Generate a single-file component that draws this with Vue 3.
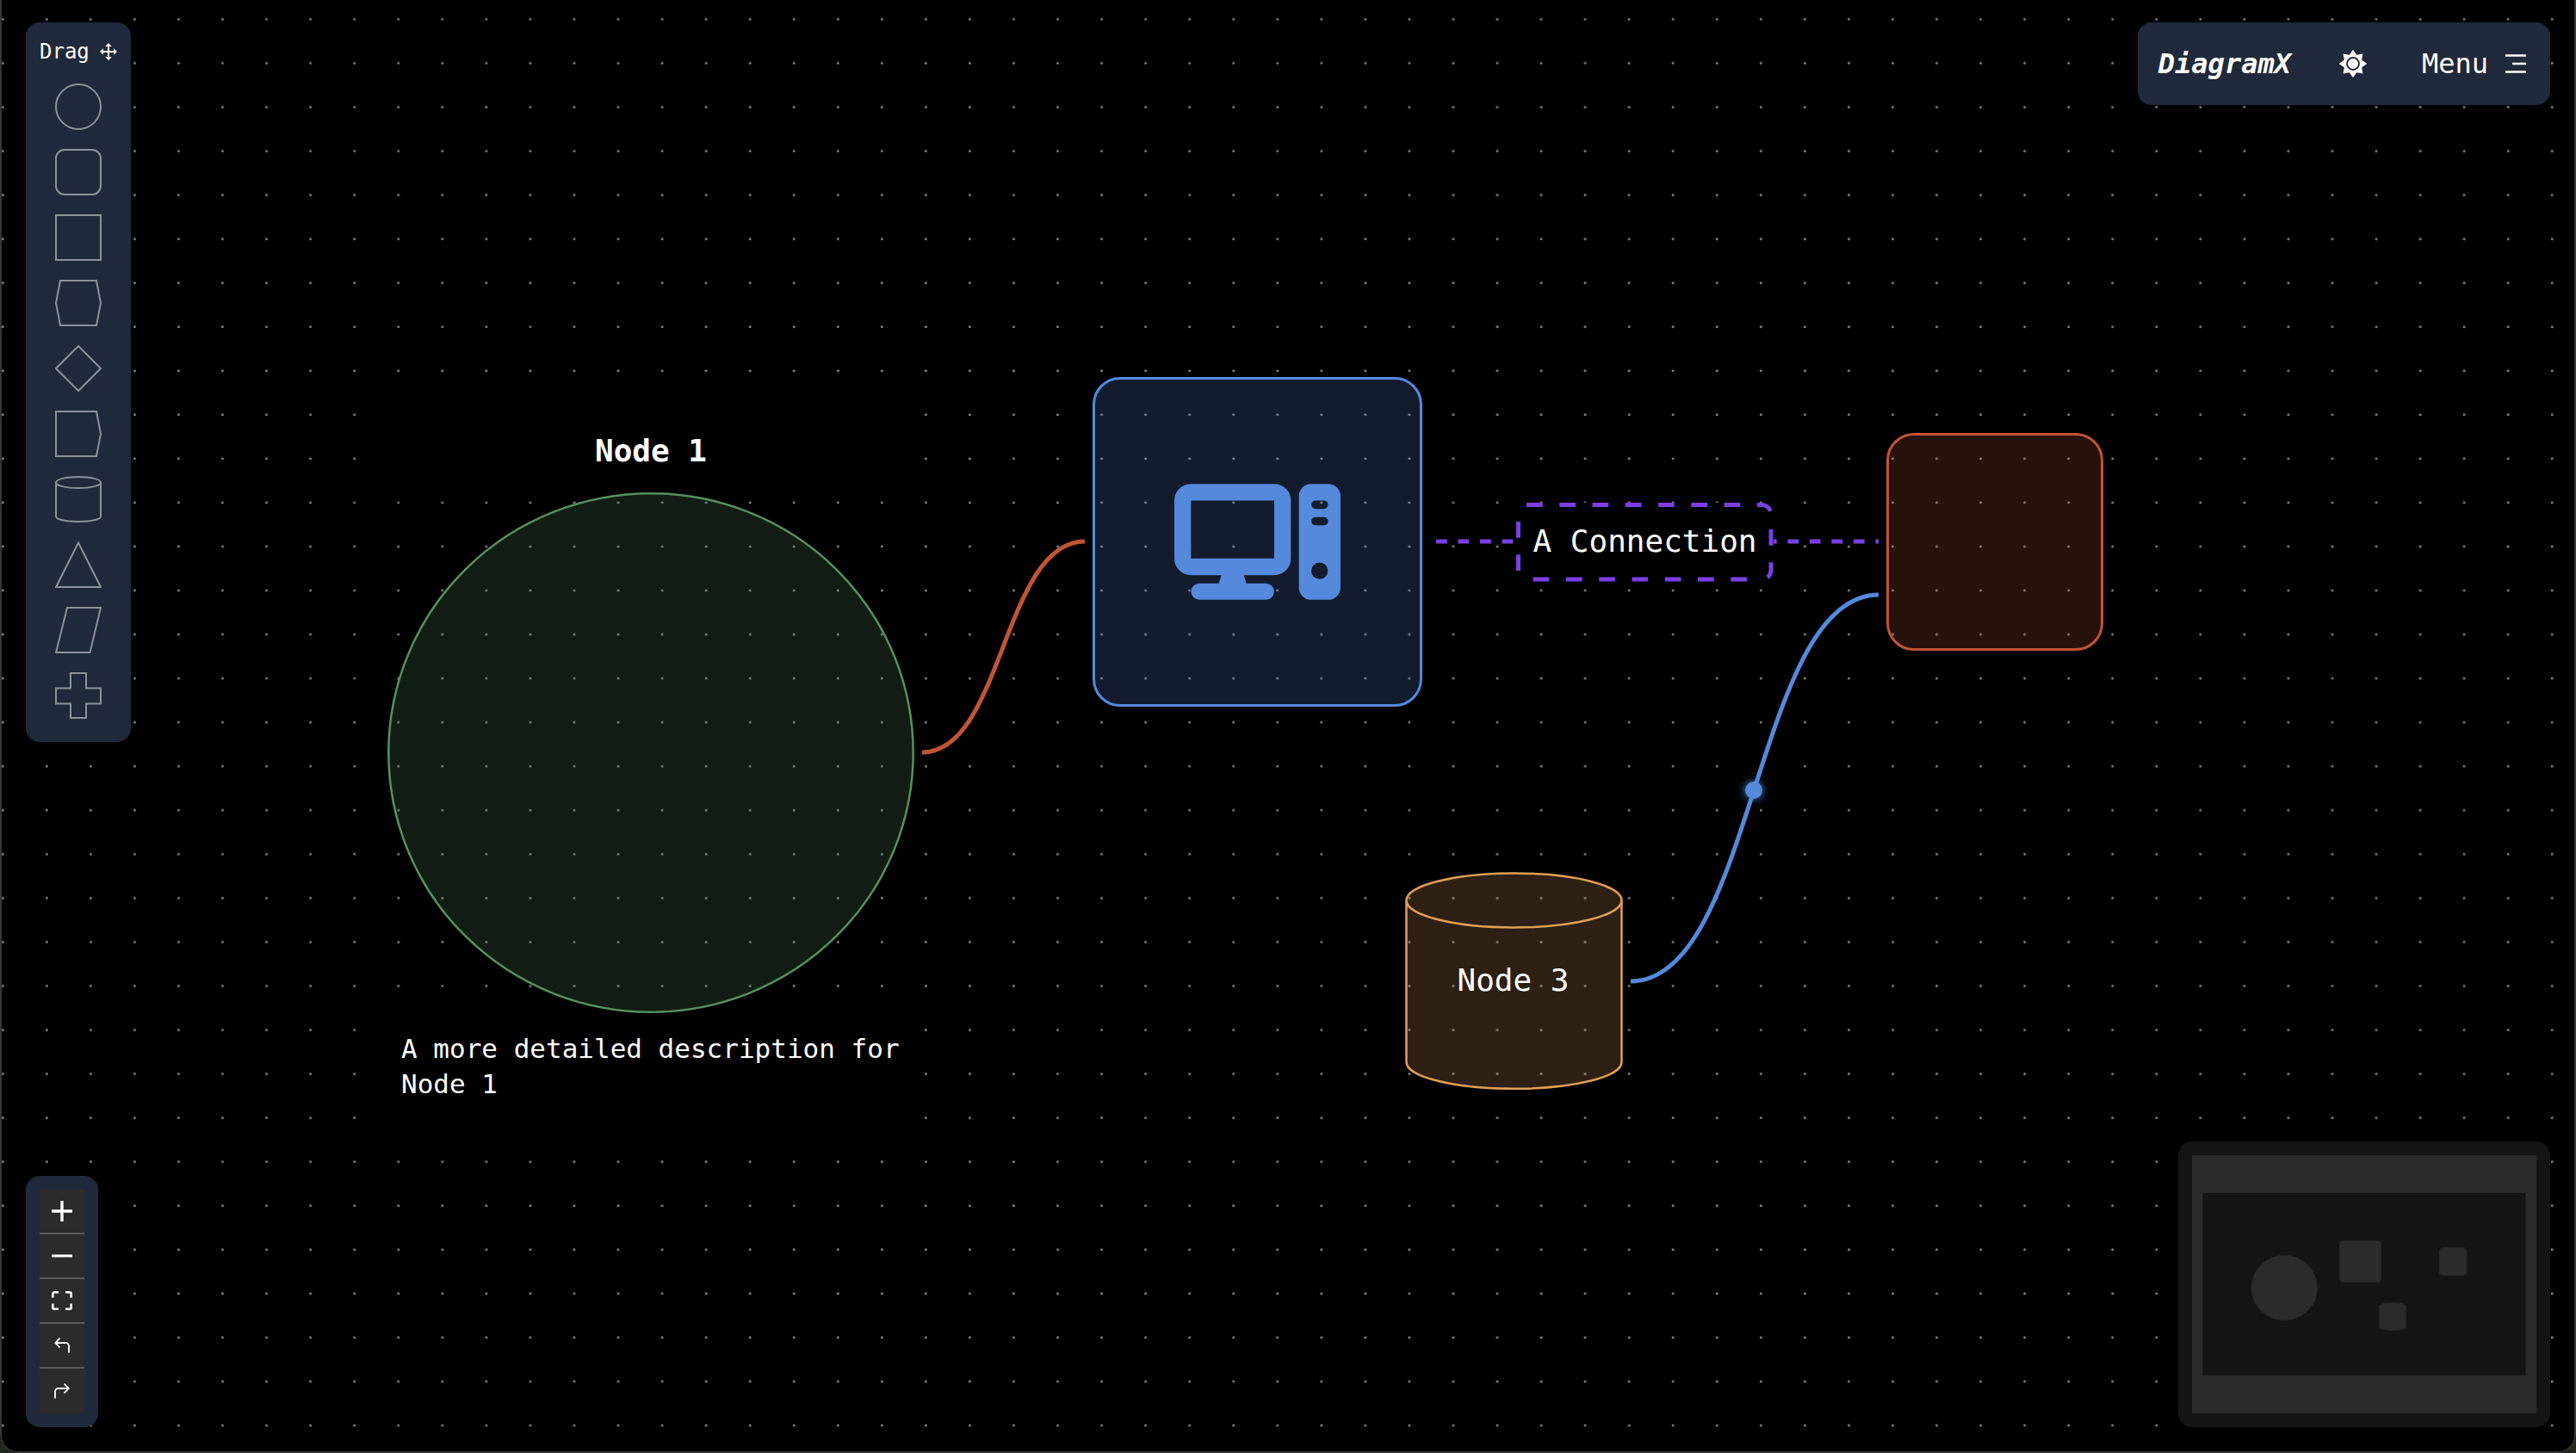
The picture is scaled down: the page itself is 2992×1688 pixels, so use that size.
<script setup>
import { ref } from 'vue'

const shapes = [
  { name: 'Circle', d: 'M27 1a26 26 0 1 0 0 52a26 26 0 1 0 0-52z' },
  { name: 'Rounded rectangle', d: 'M11 1H43a10 10 0 0 1 10 10V43a10 10 0 0 1-10 10H11A10 10 0 0 1 1 43V11A10 10 0 0 1 11 1z' },
  { name: 'Rectangle', d: 'M1 1H53V53H1z' },
  { name: 'Hexagon', d: 'M6 1H48L53 27L48 53H6L1 27z' },
  { name: 'Diamond', d: 'M27 1L53 27L27 53L1 27z' },
  { name: 'Arrow rectangle', d: 'M1 1H48L53 27L48 53H1z' },
  { name: 'Cylinder', d: 'M1 7.500V47C1 50.500 12.500 53 27 53S53 50.500 53 47V7.500M1 7.500a26 6.500 0 1 0 52 0a26 6.500 0 1 0-52 0z' },
  { name: 'Triangle', d: 'M27 1.500L53 53H1z' },
  { name: 'Parallelogram', d: 'M14 1H53L40.500 53H1z' },
  { name: 'Plus', d: 'M18 1H36V18.500H53V36.500H36V53H18V36.500H1V18.500H18z' }
]

const controls = [
  { name: 'Zoom in', w: 24, h: 24, box: '0 0 24 24', d: 'M12 0V24M0 12H24', stroke: 3.4 },
  { name: 'Zoom out', w: 24, h: 4, box: '0 0 24 4', d: 'M0 2H24', stroke: 3 },
  { name: 'Fit view', w: 24, h: 22, box: '0 0 24 22', d: 'M1.300 7.500V3.300a2 2 0 0 1 2-2H8M16 1.300h4.700a2 2 0 0 1 2 2V7.500M22.700 14.500v4.200a2 2 0 0 1-2 2H16M8 20.700H3.300a2 2 0 0 1-2-2V14.500', stroke: 2.6 },
  { name: 'Undo', w: 18, h: 18, box: '0 0 18 18', d: 'M17 17.500V9.500a3.500 3.500 0 0 0-3.500-3.500H1.200M6.500 0.700L1.200 6L6.500 11.300', stroke: 1.8 },
  { name: 'Redo', w: 18, h: 18, box: '0 0 18 18', d: 'M1 17.500V9.500a3.500 3.500 0 0 1 3.500-3.500H16.800M11.500 0.700L16.800 6L11.500 11.300', stroke: 1.8 }
]

const sun = Array.from({ length: 16 }, (_, i) => {
  const r = i % 2 ? 11 : 16.2
  const a = (i * Math.PI) / 8
  return `${(16 + r * Math.sin(a)).toFixed(2)},${(16 - r * Math.cos(a)).toFixed(2)}`
}).join(' ')

const menuOpen = ref(false)
</script>

<template>
  <main class="app">
    <svg class="grid" aria-hidden="true">
      <defs>
        <pattern id="dots" width="51.05" height="51.05" patternUnits="userSpaceOnUse">
          <circle cx="3.3" cy="22.4" r="1.5" />
        </pattern>
      </defs>
      <rect width="100%" height="100%" fill="url(#dots)" />
    </svg>

    <section class="flow" aria-label="Diagram">
      <svg class="edges" aria-hidden="true">
        <path class="edge red" d="M1071 874C1165 874 1165 629 1260 629" />
        <path class="edge purple" d="M1668 629H2182" />
        <path class="edge blue" d="M1894 1140C2038 1140 2038 691 2182 691" />
        <circle class="pulse" cx="2037" cy="918" r="10" />
      </svg>

      <article class="node node-circle">
        <h2 class="title">Node 1</h2>
        <svg class="ellipse" width="612" height="605" aria-hidden="true">
          <ellipse cx="306" cy="302.5" rx="304.700" ry="301.200" />
        </svg>
        <p class="description">A more detailed description for Node 1</p>
      </article>

      <article class="node box box-blue">
        <svg width="193" height="135" viewBox="371 426 579 404" role="img" aria-label="Computer">
          <path
            fill-rule="evenodd"
            d="M429 426H719a58 58 0 0 1 58 58V686a58 58 0 0 1-58 58H613L622 773H690a28.500 28.500 0 0 1 0 57H458a28.500 28.500 0 0 1 0-57H526L535 744H429a58 58 0 0 1-58-58V484a58 58 0 0 1 58-58zM429 484V686H719V484zM848 426H907a43 43 0 0 1 43 43V787a43 43 0 0 1-43 43H848a43 43 0 0 1-43-43V469a43 43 0 0 1 43-43zM863 484a14.500 14.500 0 0 0 0 29H892a14.500 14.500 0 0 0 0-29zM863 541.500a14.500 14.500 0 0 0 0 29H892a14.500 14.500 0 0 0 0-29zM877 700a29 29 0 1 0 0 58a29 29 0 1 0 0-58z"
          />
        </svg>
      </article>

      <article class="node box box-red"></article>

      <article class="node cylinder">
        <svg width="253" height="253" aria-hidden="true">
          <path class="fill" d="M1.500 33C1.500 15.600 57.500 1.500 126.500 1.500S251.500 15.600 251.500 33V221C251.500 238 195.500 251.800 126.500 251.800S1.500 238 1.500 221z" />
          <path class="line" d="M1.500 33C1.500 50.400 57.500 64.500 126.500 64.500S251.500 50.400 251.500 33" />
        </svg>
        <span class="caption">Node 3</span>
      </article>

      <div class="node edge-label">
        <svg class="outline" aria-hidden="true">
          <path d="M12 2.500H285a11 11 0 0 1 11 9.500" />
          <path d="M296 31V78a11 11 0 0 1-9 11" />
          <path d="M268 89H19" />
          <path d="M2.500 79V20" />
        </svg>
        <span>A Connection</span>
      </div>
    </section>

    <div class="panels">
      <div class="side">
        <aside class="toolbar">
          <h1 class="drag">
            Drag
            <svg width="20" height="20" viewBox="0 0 20 20" aria-hidden="true">
              <path d="M10 2V18M2 10H18" stroke="#fff" stroke-width="2" />
              <path d="M10 0L13.800 4H6.200zM10 20L13.800 16H6.200zM0 10L4 6.200V13.800zM20 10L16 6.200V13.800z" fill="#fff" />
            </svg>
          </h1>
          <button v-for="s in shapes" :key="s.name" type="button" class="shape" :aria-label="s.name" draggable="true">
            <svg width="54" height="54" viewBox="0 0 54 54" aria-hidden="true"><path :d="s.d" /></svg>
          </button>
        </aside>

        <nav class="controls" aria-label="Canvas controls">
          <button v-for="c in controls" :key="c.name" type="button" class="control" :aria-label="c.name">
            <svg :width="c.w" :height="c.h" :viewBox="c.box" aria-hidden="true">
              <path :d="c.d" :stroke-width="c.stroke" />
            </svg>
          </button>
        </nav>
      </div>

      <div class="side side-right">
        <header class="topbar">
          <span class="brand">DiagramX</span>
          <button type="button" class="theme" aria-label="Toggle theme">
            <svg width="32" height="32" viewBox="0 0 32 32" aria-hidden="true">
              <polygon :points="sun" fill="#fff" />
              <circle cx="16" cy="16" r="7" fill="#fff" stroke="#202939" stroke-width="1.900" />
            </svg>
          </button>
          <button type="button" class="menu" :aria-expanded="menuOpen" @click="menuOpen = !menuOpen">
            Menu
            <svg width="24" height="22" viewBox="0 0 24 22" aria-hidden="true">
              <path d="M0 1.500H24M8 11H24M0 20.500H24" stroke="#fff" stroke-width="2.700" />
            </svg>
          </button>
        </header>

        <aside class="minimap">
          <svg width="400" height="300" viewBox="0 0 400 300" role="img" aria-label="Mini map">
            <rect width="400" height="300" fill="#2a2a2a" />
            <rect x="12.500" y="44" width="375" height="212" fill="#141414" />
            <g fill="#2b2b2b" stroke="#242424" stroke-width="1">
              <ellipse cx="107.300" cy="154" rx="38.300" ry="37.700" />
              <rect x="171.500" y="99.500" width="48" height="48" rx="3.500" />
              <rect x="287.500" y="107.500" width="31.500" height="32" rx="3.500" />
              <path d="M217.500 175.500c0-2.500 7-4 15.500-4s15.500 1.500 15.500 4v24c0 2.500-7 4-15.500 4s-15.500-1.500-15.500-4z" />
            </g>
          </svg>
        </aside>
      </div>
    </div>
  </main>
</template>

<style>
html,
body {
  margin: 0;
  background: #23281c;
}
</style>

<style scoped>
* {
  box-sizing: border-box;
}

.app {
  position: relative;
  display: flex;
  min-height: 100vh;
  overflow: hidden;
  border-radius: 0 0 20px 20px;
  background: #000;
  color: #fff;
  font-family: 'DejaVu Sans Mono', 'Liberation Mono', monospace;
}

.app::after {
  content: '';
  position: absolute;
  inset: 0;
  border: 2px solid #363636;
  border-top: 0;
  border-radius: 0 0 20px 20px;
  pointer-events: none;
}

svg {
  display: block;
  flex: none;
}

button {
  display: flex;
  align-items: center;
  justify-content: center;
  padding: 0;
  border: 0;
  background: none;
  color: inherit;
  font: inherit;
  cursor: pointer;
}

.grid {
  position: absolute;
  inset: 0;
  width: 100%;
  height: 100%;
}

.grid circle {
  fill: #818181;
}

.flow,
.edges {
  position: absolute;
  inset: 0;
  width: 100%;
  height: 100%;
}

.edge {
  fill: none;
  stroke-width: 5;
}

.red {
  stroke: #c15436;
}

.purple {
  stroke: #7b3fe4;
  stroke-dasharray: 12.76;
}

.blue {
  stroke: #5489dc;
}

.pulse {
  fill: #5489dc;
  filter: drop-shadow(0 0 5px #5489dc);
}

.node {
  position: absolute;
  display: flex;
}

.node-circle {
  left: 450px;
  top: 474px;
  width: 612px;
  flex-direction: column;
}

.title {
  margin: 0;
  padding: 26px 0 24px;
  background: #000;
  font-size: 36px;
  line-height: 48px;
  text-align: center;
}

.ellipse {
  fill: rgba(86, 144, 96, 0.2);
  stroke: #569060;
  stroke-width: 2.5;
}

.description {
  margin: 0;
  padding: 21px 16px;
  background: #000;
  font-size: 31px;
  line-height: 41px;
}

.box {
  align-items: center;
  justify-content: center;
  border: 3px solid;
  border-radius: 32px;
}

.box-blue {
  left: 1269px;
  top: 438px;
  width: 383px;
  height: 383px;
  border-color: #5489dc;
  background: rgba(84, 137, 220, 0.2);
  fill: #5489dc;
}

.box-red {
  left: 2191px;
  top: 503px;
  width: 252px;
  height: 253px;
  border-color: #c15436;
  background: rgba(193, 84, 54, 0.2);
}

.cylinder {
  left: 1632px;
  top: 1013px;
  width: 253px;
  height: 253px;
  align-items: center;
  justify-content: center;
}

.cylinder svg {
  position: absolute;
  inset: 0;
  fill: none;
  stroke: #e09f54;
  stroke-width: 2.5;
}

.cylinder .fill {
  fill: rgba(225, 158, 88, 0.2);
}

.caption {
  position: relative;
  padding: 0 2px 2px 0;
  font-size: 36px;
  line-height: 48px;
}

.edge-label {
  left: 1761px;
  top: 584px;
  width: 299px;
  height: 92px;
  align-items: center;
  justify-content: center;
  padding-bottom: 2px;
  border-radius: 12px;
  background: #000;
  font-size: 36px;
  line-height: 48px;
  white-space: nowrap;
}

.outline {
  position: absolute;
  inset: 0;
  width: 100%;
  height: 100%;
  fill: none;
  stroke: #7b3fe4;
  stroke-width: 5;
  stroke-dasharray: 18.7 19.57;
}

.panels {
  position: relative;
  display: flex;
  flex: 1;
  justify-content: space-between;
  padding: 26px 30px 30px;
}

.side {
  display: flex;
  flex-direction: column;
  align-items: flex-start;
  justify-content: space-between;
  gap: 30px;
}

.side-right {
  align-items: flex-end;
}

.toolbar,
.controls,
.minimap {
  display: flex;
  flex-direction: column;
  padding: 16px;
  border-radius: 16px;
  background: #202939;
}

.drag {
  display: flex;
  align-items: center;
  gap: 12px;
  margin: 0 0 8px;
  font-size: 24px;
  font-weight: 400;
  line-height: 36px;
}

.shape {
  height: 76px;
  cursor: grab;
}

.shape path {
  fill: none;
  stroke: #8d9199;
  stroke-width: 2;
}

.control {
  width: 52px;
  height: 52px;
  border-bottom: 2px solid #5a5a5a;
  background: #2b2b2b;
}

.control:last-child {
  border-bottom: 0;
}

.control path {
  fill: none;
  stroke: #fff;
}

.topbar {
  display: flex;
  align-items: center;
  height: 96px;
  padding: 0 28px 0 24px;
  border-radius: 16px;
  background: #202939;
  font-size: 32px;
  line-height: 40px;
}

.brand {
  font-style: italic;
  font-weight: 700;
}

.theme {
  margin: 0 64px 0 56px;
}

.menu {
  gap: 20px;
}

.minimap {
  background: #141414;
}
</style>
